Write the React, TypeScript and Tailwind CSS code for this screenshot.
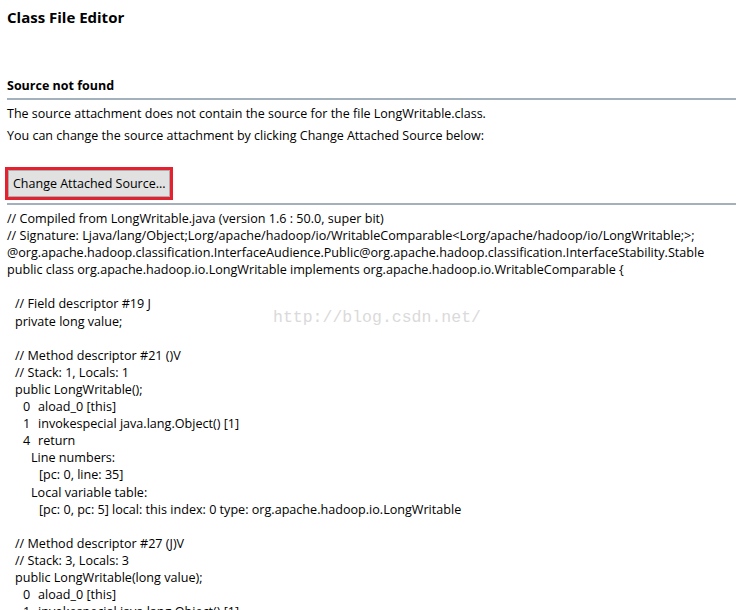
import React from "react";

type L = { t: string; i?: number; n?: string };

const code: L[] = [
  { t: "// Compiled from LongWritable.java (version 1.6 : 50.0, super bit)" },
  { t: "// Signature: Ljava/lang/Object;Lorg/apache/hadoop/io/WritableComparable<Lorg/apache/hadoop/io/LongWritable;>;" },
  { t: "@org.apache.hadoop.classification.InterfaceAudience.Public@org.apache.hadoop.classification.InterfaceStability.Stable" },
  { t: "public class org.apache.hadoop.io.LongWritable implements org.apache.hadoop.io.WritableComparable {" },
  { t: "" },
  { t: "// Field descriptor #19 J", i: 1 },
  { t: "private long value;", i: 1 },
  { t: "" },
  { t: "// Method descriptor #21 ()V", i: 1 },
  { t: "// Stack: 1, Locals: 1", i: 1 },
  { t: "public LongWritable();", i: 1 },
  { t: "aload_0 [this]", n: "0" },
  { t: "invokespecial java.lang.Object() [1]", n: "1" },
  { t: "return", n: "4" },
  { t: "Line numbers:", i: 3 },
  { t: "[pc: 0, line: 35]", i: 4 },
  { t: "Local variable table:", i: 3 },
  { t: "[pc: 0, pc: 5] local: this index: 0 type: org.apache.hadoop.io.LongWritable", i: 4 },
  { t: "" },
  { t: "// Method descriptor #27 (J)V", i: 1 },
  { t: "// Stack: 3, Locals: 3", i: 1 },
  { t: "public LongWritable(long value);", i: 1 },
  { t: "aload_0 [this]", n: "0" },
  { t: "invokespecial java.lang.Object() [1]", n: "1" },
];

const indent: Record<number, string> = {
  0: "pl-0",
  1: "pl-[8px]",
  3: "pl-[24px]",
  4: "pl-[32px]",
};

export default function App() {
  return (
    <div
      className="relative w-[739px] h-[610px] overflow-hidden bg-white text-black"
      style={{ fontFamily: '"Open Sans", "Noto Sans", sans-serif' }}
    >
      <div className="pl-[7px] pt-[6px] h-[22px] leading-[22px] text-[15px] font-bold">Class File Editor</div>
      <div className="pl-[7px] mt-[54px] h-[20px] leading-[20px] text-[12.5px] font-bold">Source not found</div>
      <div className="ml-[7px] mr-[3px] mt-[2px] h-[2px] bg-[#a3b1bc]" />
      <div className="pl-[7px] mt-[3px] text-[12.5px]">
        <div className="h-[22px] leading-[22px]">The source attachment does not contain the source for the file LongWritable.class.</div>
        <div className="h-[22px] leading-[22px]">You can change the source attachment by clicking Change Attached Source below:</div>
      </div>
      <div className="pl-[5px] mt-[20px]">
        <div className="inline-flex border-[3px] border-[#e3212f] w-[168px] h-[33px]">
          <button className="flex-1 bg-[#e1e1e1] border border-[#adadad] text-[12.5px] text-left pl-[4px] leading-[25px] whitespace-nowrap">
            Change Attached Source...
          </button>
        </div>
      </div>
      <div className="ml-[7px] mr-[3px] mt-[3px] h-[2px] bg-[#a3b1bc]" />
      <div className="pl-[7px] mt-[5px] text-[12.6px]">
        {code.map((l, k) =>
          l.n ? (
            <div key={k} className="h-[17.1px] leading-[17.1px] flex whitespace-pre">
              <span className="w-[31px] pl-[16px]">{l.n}</span>
              <span>{l.t}</span>
            </div>
          ) : (
            <div key={k} className={`h-[17.1px] leading-[17.1px] whitespace-pre ${indent[l.i ?? 0]}`}>
              {l.t}
            </div>
          )
        )}
      </div>
      <div
        className="absolute left-[273px] top-[306px] text-[16.5px] text-[#dadada] pointer-events-none"
        style={{ fontFamily: '"Liberation Mono", monospace' }}
      >
        http://blog.csdn.net/
      </div>
    </div>
  );
}
